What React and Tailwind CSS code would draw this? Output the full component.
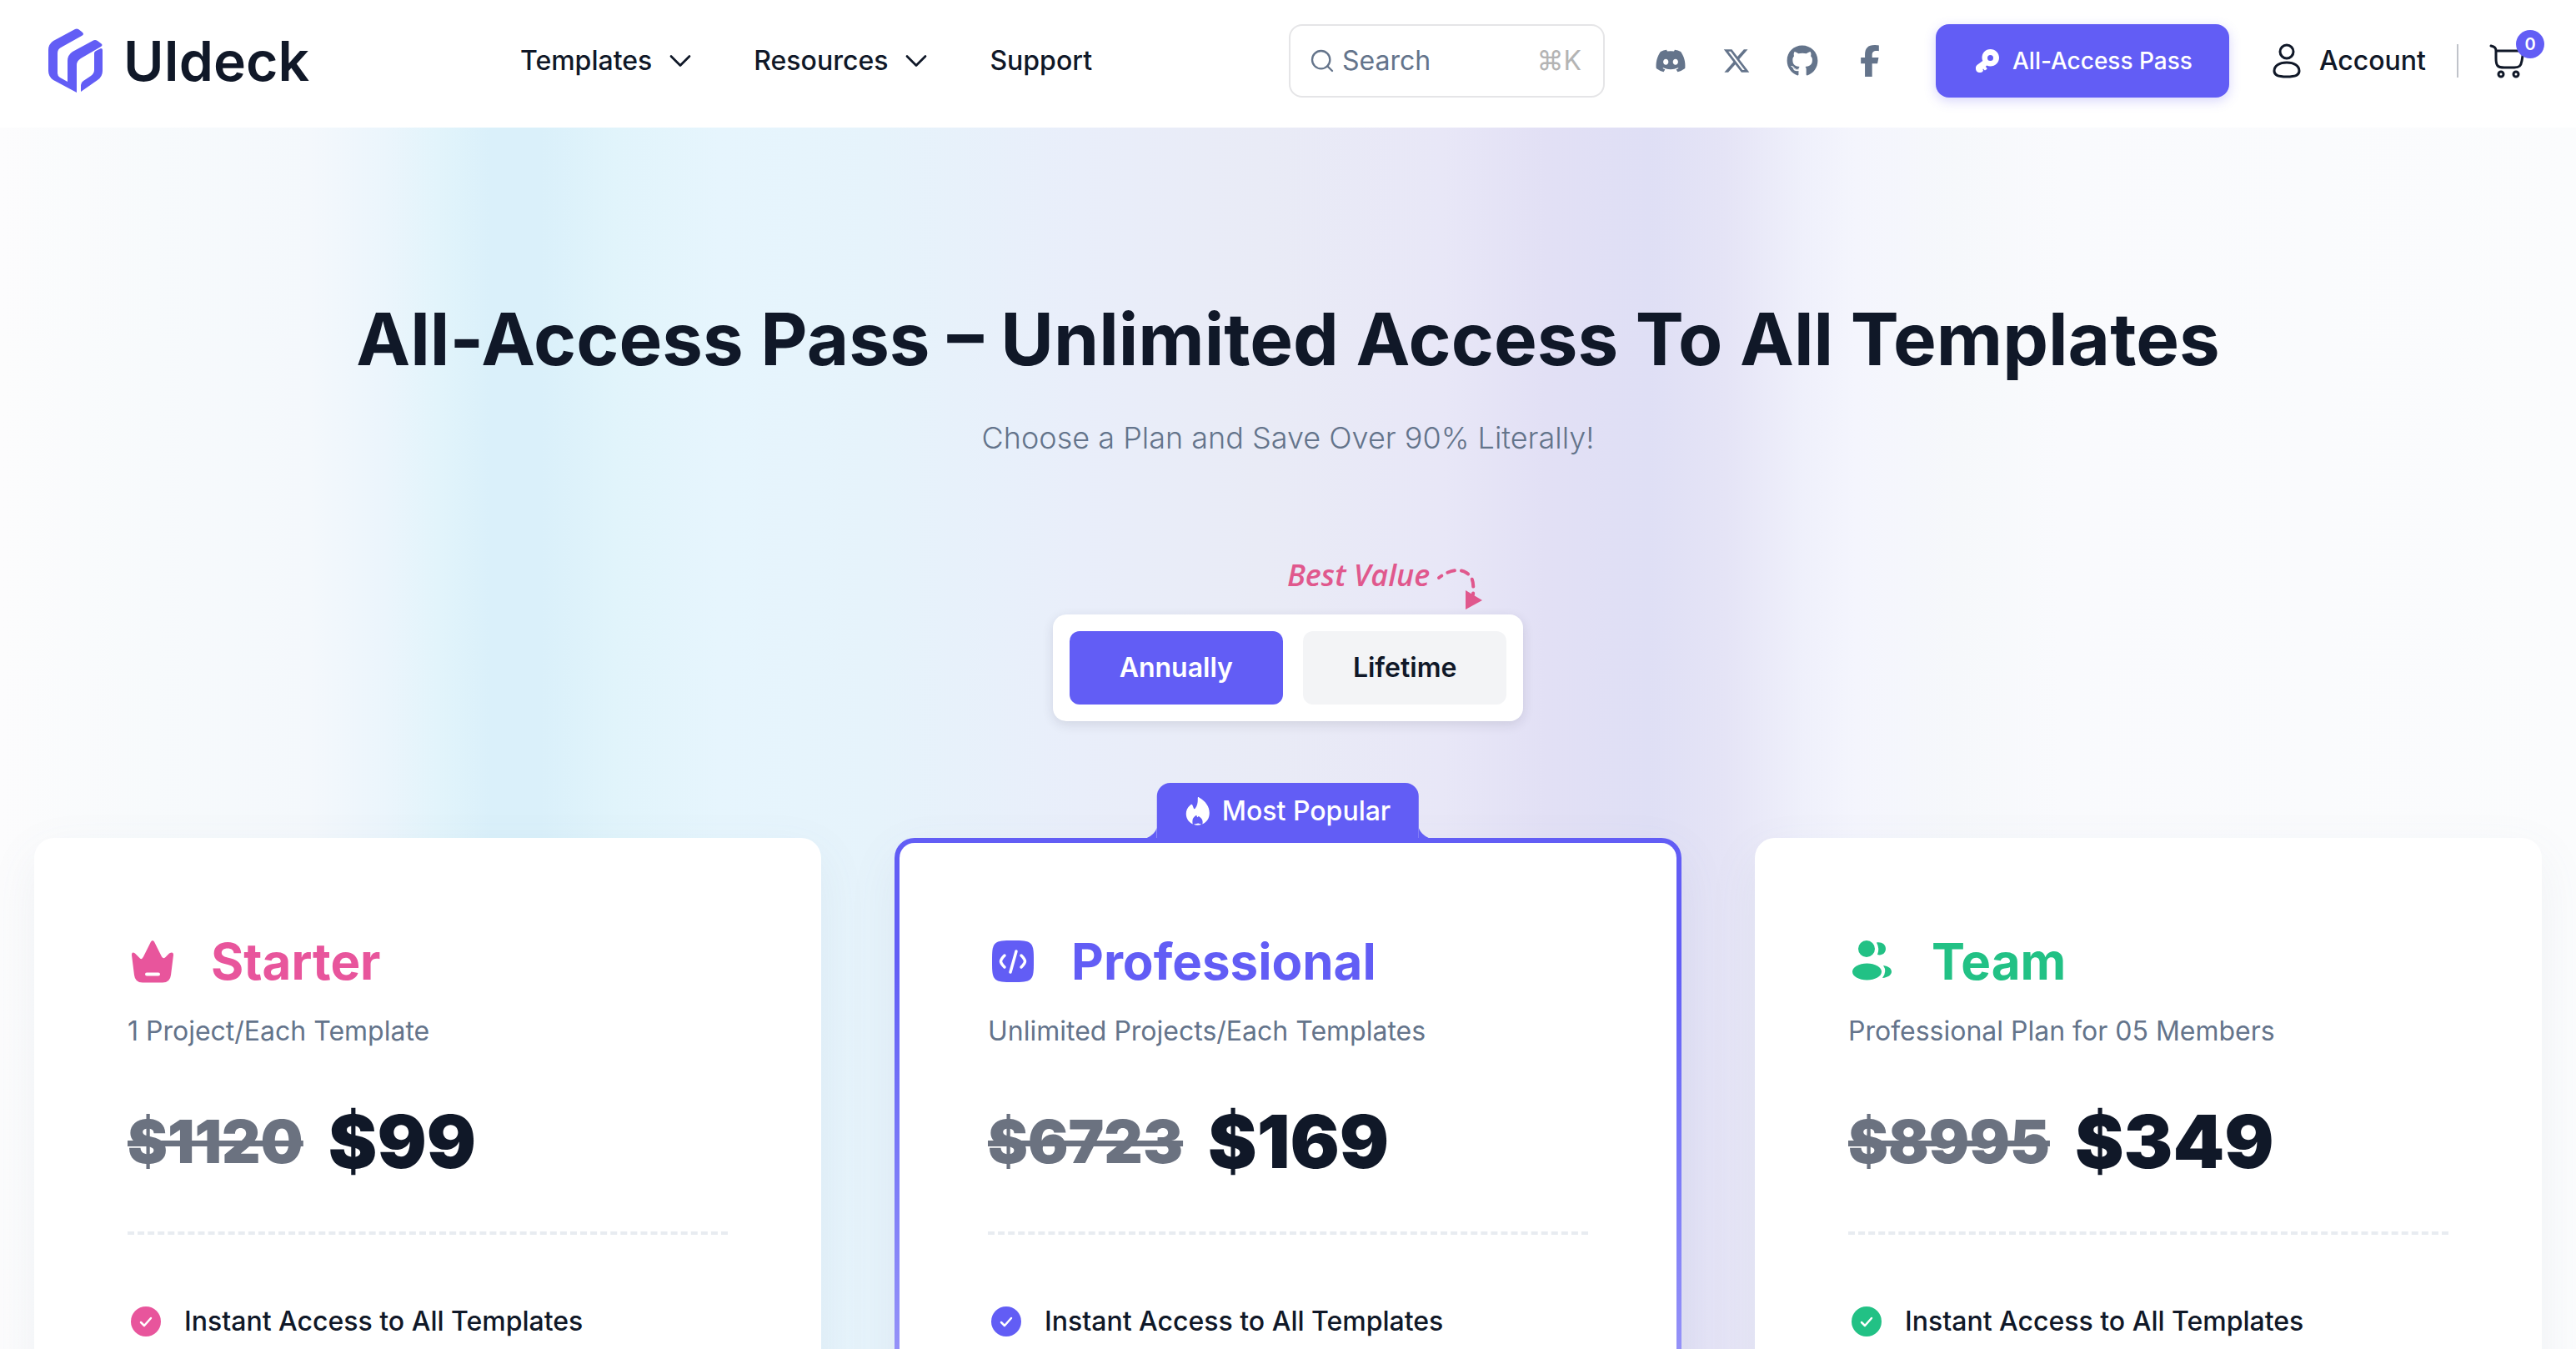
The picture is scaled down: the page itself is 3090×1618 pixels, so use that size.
import { useState } from 'react';
import { ChevronDown, Search } from 'lucide-react';
import { FaDiscord, FaXTwitter, FaGithub, FaFacebookF } from 'react-icons/fa6';

const plans = [
  {
    id: 'starter',
    name: 'Starter',
    note: '1 Project/Each Template',
    oldPrice: '$1120',
    price: '$99',
    color: 'text-[#e8559c]',
    icon: CrownIcon,
  },
  {
    id: 'professional',
    name: 'Professional',
    note: 'Unlimited Projects/Each Templates',
    oldPrice: '$6723',
    price: '$169',
    color: 'text-[#625df5]',
    icon: CodeIcon,
    popular: true,
  },
  {
    id: 'team',
    name: 'Team',
    note: 'Professional Plan for 05 Members',
    oldPrice: '$8995',
    price: '$349',
    color: 'text-[#22c185]',
    icon: TeamIcon,
  },
];

const socials = [
  { label: 'Discord', icon: FaDiscord, size: 'size-[38px]' },
  { label: 'X', icon: FaXTwitter, size: 'size-[34px]' },
  { label: 'GitHub', icon: FaGithub, size: 'size-[38px]' },
  { label: 'Facebook', icon: FaFacebookF, size: 'size-[38px]' },
];

function LogoMark() {
  return (
    <svg viewBox="0 0 66 78" className="h-[78px] w-[66px] text-[#625df5]" fill="currentColor" aria-hidden="true">
      <path d="M32 1q2-1 4 0l4 3q4 3 0 5L15 23q-4 2-4 7v24q0 3 3 5l9 5V39q0-7 6-11L53 15q3-2 6 0l4 3q3 2 0 4L39 36q-5 3-5 8v33L6 62Q0 58 0 51V26q0-7 6-11z" />
      <path d="M55 30q0-2 2-3l6-3q2 0 2 2v25q0 7-6 11L39 76V68q0-3 3-5l9-6q4-3 4-7z" />
    </svg>
  );
}

function CrownIcon() {
  return (
    <svg viewBox="0 0 60 60" className="size-[60px]" aria-hidden="true">
      <path
        d="M28 6.500q2-3 4 0l9 18q2 3 4 1l5-5q5-3 5 2l-3 24q-1 9-10 9H18q-9 0-10-9L5 22.500q0-5 4-2l6 6q2 2 4-2z"
        fill="currentColor"
      />
      <path d="M23 45.500h14" stroke="#fff" strokeWidth="4" strokeLinecap="round" />
    </svg>
  );
}

function CodeIcon() {
  return (
    <svg viewBox="0 0 60 60" className="size-[60px]" fill="none" aria-hidden="true">
      <path
        d="M30 5c11 0 17.500 0 21.300 3.700C55 12.500 55 19 55 30s0 17.500-3.700 21.300C47.500 55 41 55 30 55s-17.500 0-21.300-3.700C5 47.500 5 41 5 30s0-17.500 3.700-21.300C12.500 5 19 5 30 5z"
        fill="currentColor"
      />
      <path
        d="M20 23c-6 6-6 8 0 14M40 23c6 6 6 8 0 14M34 18l-7 25"
        stroke="#fff"
        strokeWidth="3.500"
        strokeLinecap="round"
      />
    </svg>
  );
}

function TeamIcon() {
  return (
    <svg viewBox="0 0 60 60" className="size-[60px]" fill="currentColor" aria-hidden="true">
      <circle cx="22" cy="15" r="10" />
      <ellipse cx="22.500" cy="42.500" rx="17.500" ry="10" />
      <path d="M34 7.500c6-1 11 2 11 7.500s-5 8.500-10 7q3-7-1-14.500z" />
      <path d="M42 35c7 1 10 4 10 7.500s-4 7-11 7.500q6-8 1-15z" />
    </svg>
  );
}

function KeyIcon() {
  return (
    <svg viewBox="0 0 28 28" className="size-7" aria-hidden="true">
      <path
        fill="currentColor"
        fillRule="evenodd"
        d="M17.500 0C23.500 0 28 4.500 28 10.300S23.500 20.500 17.500 20.500c-1.600 0-3-.3-4.300-.9l-1.400 1.500 1.200 1.200q1 1 0 2l-1 .5q-1 1-2 0L9 23.500c-.8 1-.6 1.200 0 2q-.5 2-3 2.500-3 .5-5-1.500Q-.5 24 0 21.500q.3-1.500 1.500-2.600L8.300 14q-.8-1.700-.8-3.700C7.500 4.500 11.600 0 17.500 0zm0 7a3.500 3.500 0 1 0 0 7 3.500 3.500 0 0 0 0-7z"
      />
    </svg>
  );
}

function UserIcon() {
  return (
    <svg viewBox="0 0 34 42" className="h-[42px] w-[34px]" fill="none" stroke="currentColor" strokeWidth="3" aria-hidden="true">
      <circle cx="17" cy="10" r="8" />
      <path d="M17 23c9 0 15 4 15 10 0 5-4 7-15 7S2 38 2 33c0-6 6-10 15-10z" />
    </svg>
  );
}

function CartIcon() {
  return (
    <svg viewBox="0 0 42 42" className="size-[42px]" fill="none" stroke="currentColor" strokeWidth="3" strokeLinecap="round" aria-hidden="true">
      <path d="M2 3c4 1 6 2 6 6v9c0 9 2 11 10 11h12c6 0 8-2 9-8l2-12H8" />
      <circle cx="14" cy="37" r="3" />
      <circle cx="32" cy="37" r="3" />
    </svg>
  );
}

function FlameIcon() {
  return (
    <svg viewBox="0 0 30 34" className="h-[34px] w-[30px]" fill="currentColor" aria-hidden="true">
      <path d="M16.500.5C15.500-.4 15 0 15 1.500c.2 5-.5 9-3 12-.8 1-1.500 1-2-.2L8.800 10C8 8.500 7.200 8.500 6 9.700 2.500 12.500 1 16 1 20c0 5.500 3 10 8 12.500-1-5 0-8 3.500-10.300.8-.5 1.500-.2 1.500.7.100 1.500.6 1.600 1.200.8.500-1 1-1 1.700-.3 3.600 2.500 4.600 5.600 3.600 9.100C26 30 29 25.500 29 19c0-7.500-4.500-14-12.500-18.500z" />
      <path d="M10 32.700c3 1.500 6.500 1.500 9.500 0l-4-1.200z" />
    </svg>
  );
}

function CheckIcon() {
  return (
    <svg viewBox="0 0 44 44" className="size-11" fill="none" aria-hidden="true">
      <circle cx="22" cy="22" r="18" fill="currentColor" />
      <path d="M16 23l4 4 8-9" stroke="#fff" strokeWidth="2.500" strokeLinecap="round" strokeLinejoin="round" />
    </svg>
  );
}

function Header() {
  return (
    <header className="flex shrink-0 items-center bg-white pt-[29px] pr-[62px] pb-9 pl-[58px]">
      <a href="#" className="flex w-[322px] items-center gap-6">
        <LogoMark />
        <span className="text-[66px] leading-[78px] font-semibold">UIdeck</span>
      </a>

      <nav className="ml-[244px] flex items-center gap-[66px] text-[32px] leading-10 font-medium">
        <button className="flex items-center gap-3">
          Templates <ChevronDown className="size-11" strokeWidth={1.5} />
        </button>
        <button className="flex items-center gap-3">
          Resources <ChevronDown className="size-11" strokeWidth={1.5} />
        </button>
        <a href="#">Support</a>
      </nav>

      <div className="ml-auto flex items-center">
        <label className="flex h-[88px] w-[379px] items-center gap-2 rounded-2xl border-2 border-[#e5e5e7] pr-[26px] pl-[22px] text-[32px] text-[#64748b]">
          <Search className="size-8 shrink-0" strokeWidth={1.75} />
          <input
            type="search"
            aria-label="Search"
            placeholder="Search"
            className="min-w-0 flex-1 outline-none placeholder:text-[#64748b]"
          />
          <span className="text-[#b4b4b4]">⌘K</span>
        </label>

        <div className="ml-[60px] flex items-center gap-[43px] text-[#64748b]">
          {socials.map(({ label, icon: Icon, size }) => (
            <a key={label} href="#" aria-label={label}>
              <Icon className={size} />
            </a>
          ))}
        </div>

        <a
          href="#"
          className="ml-[60px] flex h-[88px] items-center gap-4 rounded-2xl bg-[#625df5] pr-11 pl-12 text-[28px] font-medium text-white shadow-[0_4px_14px_rgba(98,93,245,0.25)]"
        >
          <KeyIcon /> All-Access Pass
        </a>

        <a href="#" className="ml-[52px] flex items-center gap-[22px] text-[32px] font-medium">
          <UserIcon /> Account
        </a>
        <span className="mx-[37px] h-10 w-0.5 bg-[#c0c3ca]" />
        <button className="relative" aria-label="Cart">
          <CartIcon />
          <span className="absolute -top-4 -right-6 flex size-[34px] items-center justify-center rounded-full bg-[#625df5] text-xl font-semibold text-white">
            0
          </span>
        </button>
      </div>
    </header>
  );
}

function BillingToggle() {
  const [billing, setBilling] = useState('Annually');

  return (
    <div className="mt-[114px] flex flex-col">
      <div className="flex h-[68px] items-start justify-end gap-2 pr-12 text-[#e0588d]">
        <span className="font-['Open_Sans','Noto_Sans',sans-serif] text-[36px] leading-[42px] font-semibold italic">Best Value</span>
        <svg viewBox="0 0 56 56" className="mt-2 size-14" fill="none" aria-hidden="true">
          <path d="M3 16C16 6 28 5 36 10s9 12 8 26" stroke="currentColor" strokeWidth="4" strokeDasharray="9 8" strokeDashoffset="5" strokeLinecap="round" />
          <path d="M35 31l20 12-20 11z" fill="currentColor" />
        </svg>
      </div>
      <div className="flex gap-6 rounded-2xl bg-white p-5 shadow-[0_4px_14px_rgba(30,30,60,0.12)]">
        {['Annually', 'Lifetime'].map((option) => (
          <button
            key={option}
            onClick={() => setBilling(option)}
            className={`h-[88px] rounded-xl px-[60px] text-[32px] font-semibold ${
              billing === option ? 'bg-[#625df5] text-white' : 'bg-[#f3f4f6]'
            }`}
          >
            {option}
          </button>
        ))}
      </div>
    </div>
  );
}

function PopularTab() {
  return (
    <div className="absolute -top-[66px] left-1/2 flex h-[68px] -translate-x-1/2 items-center gap-3.5 rounded-t-2xl bg-[#625df5] px-[34px] text-[32px] font-medium text-white">
      {/* Curved feet that join the tab to the card border */}
      <svg viewBox="0 0 12 14" className="absolute bottom-0 -left-3 h-3.5 w-3" fill="#625df5" aria-hidden="true">
        <path d="M12 0v14H0v-2Q9 8 12 0z" />
      </svg>
      <svg viewBox="0 0 12 14" className="absolute -right-3 bottom-0 h-3.5 w-3" fill="#625df5" aria-hidden="true">
        <path d="M0 0v14h12v-2Q3 8 0 0z" />
      </svg>
      <FlameIcon />
      <span className="whitespace-nowrap">Most Popular</span>
    </div>
  );
}

function PlanCard({ plan }) {
  const Icon = plan.icon;

  return (
    <article
      className={`relative rounded-3xl p-1.5 shadow-[0_20px_60px_rgba(100,116,139,0.08)] ${
        plan.popular ? 'bg-linear-to-b from-[#625df5] from-20% to-[#a19cf8]' : 'bg-white'
      }`}
    >
      {plan.popular && <PopularTab />}
      <div className="rounded-[18px] bg-white px-[106px] pt-[106px] pb-28">
        <h2 className={`flex items-center gap-10 text-[60px] leading-[72px] font-bold ${plan.color}`}>
          <Icon /> {plan.name}
        </h2>
        <p className="mt-6 text-[32px] leading-[48px] text-[#64748b]">{plan.note}</p>
        <p className="mt-[60px] flex h-24 items-center gap-[30px] font-black">
          <del className="text-[72px] leading-none text-[#6b7280]">{plan.oldPrice}</del>
          <span className="text-[88px] leading-none">{plan.price}</span>
        </p>
        <hr className="mt-[60px] border-t-4 border-dashed border-[#e8ecf1]" />
        <ul className="mt-20 text-[32px] leading-[48px] font-[450]">
          <li className="flex items-center gap-6">
            <span className={plan.color}>
              <CheckIcon />
            </span>
            Instant Access to All Templates
          </li>
        </ul>
      </div>
    </article>
  );
}

export default function App() {
  return (
    <div className="flex h-screen flex-col overflow-hidden bg-white font-['Inter',sans-serif] text-[#101828]">
      <Header />
      <main className="min-h-0 flex-1 overflow-hidden bg-[linear-gradient(90deg,#fcfcfd_0%,#f7fafc_6%,#f4f8fc_12%,#ebf5fc_15%,#e2f4fb_17%,#daf0fa_19%,#daf0fa_21%,#e1f4fb_24%,#e6f5fd_28%,#e6f3fb_34%,#e9eefa_42%,#e9ebf6_49%,#e8e7f7_56%,#e2e0f5_60%,#dfdff5_64%,#e5e4f6_67%,#eff0fb_70%,#f4f5fd_72%,#f6f8fb_76%,#f9fafd_80%,#fbfcfd_100%)]">
        <section className="flex flex-col items-center pt-[202px]">
          <h1 className="text-center text-[87px] leading-[104px] font-bold">
            All-Access Pass – Unlimited Access To All Templates
          </h1>
          <p className="mt-9 text-[36px] leading-[60px] font-[350] text-[#64748b]">
            Choose a Plan and Save Over 90% Literally!
          </p>
          <BillingToggle />
        </section>
        <section className="mt-[140px] grid grid-cols-3 gap-[88px] px-[41px]">
          {plans.map((plan) => (
            <PlanCard key={plan.id} plan={plan} />
          ))}
        </section>
      </main>
    </div>
  );
}
